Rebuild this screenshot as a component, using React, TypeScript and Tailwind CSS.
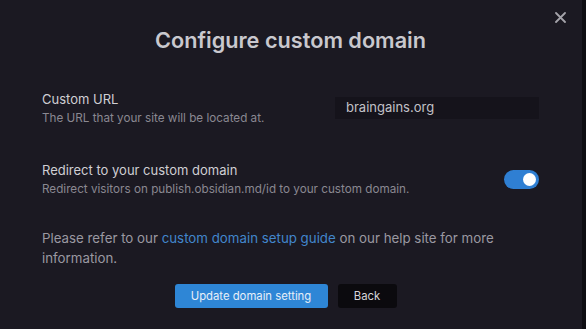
export default function App() {
  return (
    <div
      className="flex h-[329px] w-[586px] bg-[#0e0d12]"
      style={{ fontFamily: 'Inter, "Noto Sans", sans-serif' }}
    >
      <div className="relative flex w-[582px] flex-col bg-[#1b1922] px-[42px] pr-[43px]">
        {/* Close */}
        <button className="absolute right-[16px] top-[11px] flex h-[12px] w-[12px] items-center justify-center text-[#a4a3aa]">
          <svg width="11" height="11" viewBox="0 0 11 11" fill="none" stroke="currentColor" strokeWidth="1.8" strokeLinecap="round">
            <path d="M1 1l9 9M10 1l-9 9" />
          </svg>
        </button>

        <h1 className="mt-[26px] text-center text-[21.7px] font-semibold leading-[28px] text-[#c9c8ce]">
          Configure custom domain
        </h1>

        {/* Custom URL */}
        <div className="mt-[35px] flex items-center justify-between">
          <div>
            <div className="text-[13px] leading-[20px] text-[#d0cfd4]">Custom URL</div>
            <div className="text-[11.7px] leading-[18px] text-[#8a8891]">
              The URL that your site will be located at.
            </div>
          </div>
          <div className="flex h-[22px] w-[204px] items-center bg-[#15131b] px-[11px] text-[13px] text-[#c2c1c7]">
            braingains.org
          </div>
        </div>

        {/* Redirect */}
        <div className="mt-[33px] flex items-center justify-between">
          <div>
            <div className="text-[13px] leading-[20px] text-[#d0cfd4]">Redirect to your custom domain</div>
            <div className="text-[11.7px] leading-[18px] text-[#8a8891]">
              Redirect visitors on publish.obsidian.md/id to your custom domain.
            </div>
          </div>
          <div className="flex h-[19px] w-[35px] items-center justify-end rounded-full bg-[#2f7fd3] pr-[3px]">
            <div className="h-[13px] w-[13px] rounded-full bg-white" />
          </div>
        </div>

        <p className="mt-[30px] text-[13.3px] leading-[20px] text-[#9a98a1]">
          Please refer to our <span className="text-[#4286cc]">custom domain setup guide</span> on our help site for more
          information.
        </p>

        <div className="mt-[16px] flex justify-center gap-[10px] pr-[10px]">
          <button className="h-[24px] w-[153px] rounded-[3px] bg-[#2e86d6] text-[11.3px] text-[#e6eef8]">
            Update domain setting
          </button>
          <button className="h-[24px] w-[59px] rounded-[3px] bg-[#0b0a0e] text-[11.3px] text-[#d6d5da]">
            Back
          </button>
        </div>
      </div>
    </div>
  );
}
